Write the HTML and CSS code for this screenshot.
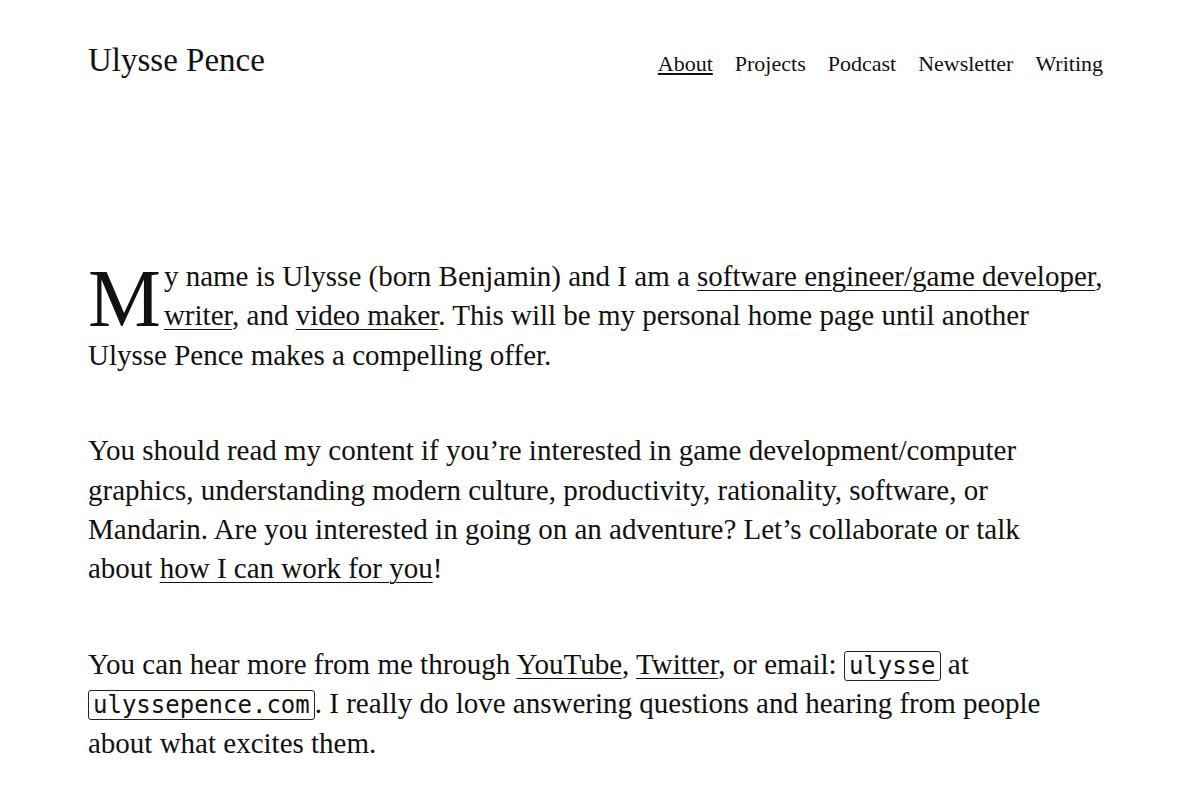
FILE: index.html
```html
<!DOCTYPE html>
<html lang="en">
<head>
    <meta charset="UTF-8">
    <title>Ulysse Pence</title>
    <link rel="stylesheet" href="styles.css">
</head>
<body>
<div class="page">
    <div class="header">
        <a class="site-title" href="javascript:;">Ulysse Pence</a>
        <ul class="nav">
            <li><a class="current" href="javascript:;">About</a></li>
            <li><a href="javascript:;">Projects</a></li>
            <li><a href="javascript:;">Podcast</a></li>
            <li><a href="javascript:;">Newsletter</a></li>
            <li><a href="javascript:;">Writing</a></li>
        </ul>
    </div>

    <div class="content">
        <p class="intro"><span class="drop">M</span>y name is Ulysse (born Benjamin) and I am a <a href="javascript:;">software engineer/game developer</a>, <a href="javascript:;">writer</a>, and <a href="javascript:;">video maker</a>. This will be my personal home page until another Ulysse Pence makes a compelling offer.</p>

        <p>You should read my content if you’re interested in game development/computer graphics, understanding modern culture, productivity, rationality, software, or Mandarin. Are you interested in going on an adventure? Let’s collaborate or talk about&nbsp;<a href="javascript:;">how I can work for you</a>!</p>

        <p>You can hear more from me through <a href="javascript:;">YouTube</a>, <a href="javascript:;">Twitter</a>, or email: <code>ulysse</code> at <code>ulyssepence.com</code>. I really do love answering questions and hearing from people about what excites them.</p>
    </div>
</div>
</body>
</html>
```

FILE: styles.css
```css
*{
    margin: 0px;
    padding: 0px;
}
body{
    background-color: #fff;
    color: #111;
    font-family: "Liberation Serif", "Times New Roman", serif;
}
a{
    color: #111;
}
.page{
    max-width: 1024px;
    margin: 0 auto;
}
.header{
    display: flex;
    justify-content: space-between;
    align-items: baseline;
    padding-top: 42px;
}
.site-title{
    font-size: 33px;
    text-decoration: none;
}
.nav{
    display: flex;
    gap: 22px;
    list-style: none;
    padding-right: 9px;
}
.nav a{
    font-size: 22px;
    text-decoration: none;
}
.nav a.current{
    text-decoration: underline;
}
.content{
    margin-top: 178px;
    font-size: 29px;
    line-height: 39.4px;
}
.content p{
    margin-bottom: 56px;
}
.content a{
    text-decoration: underline;
    text-decoration-thickness: 1px;
    text-underline-offset: 4px;
}
.drop{
    float: left;
    font-size: 82px;
    line-height: 66px;
    padding-top: 9px;
    margin-right: 3px;
}
code{
    font-family: "DejaVu Sans Mono", monospace;
    font-size: 24px;
    line-height: 1;
    border: 1px solid #222;
    border-radius: 3px;
    padding: 0 4px;
}
```
